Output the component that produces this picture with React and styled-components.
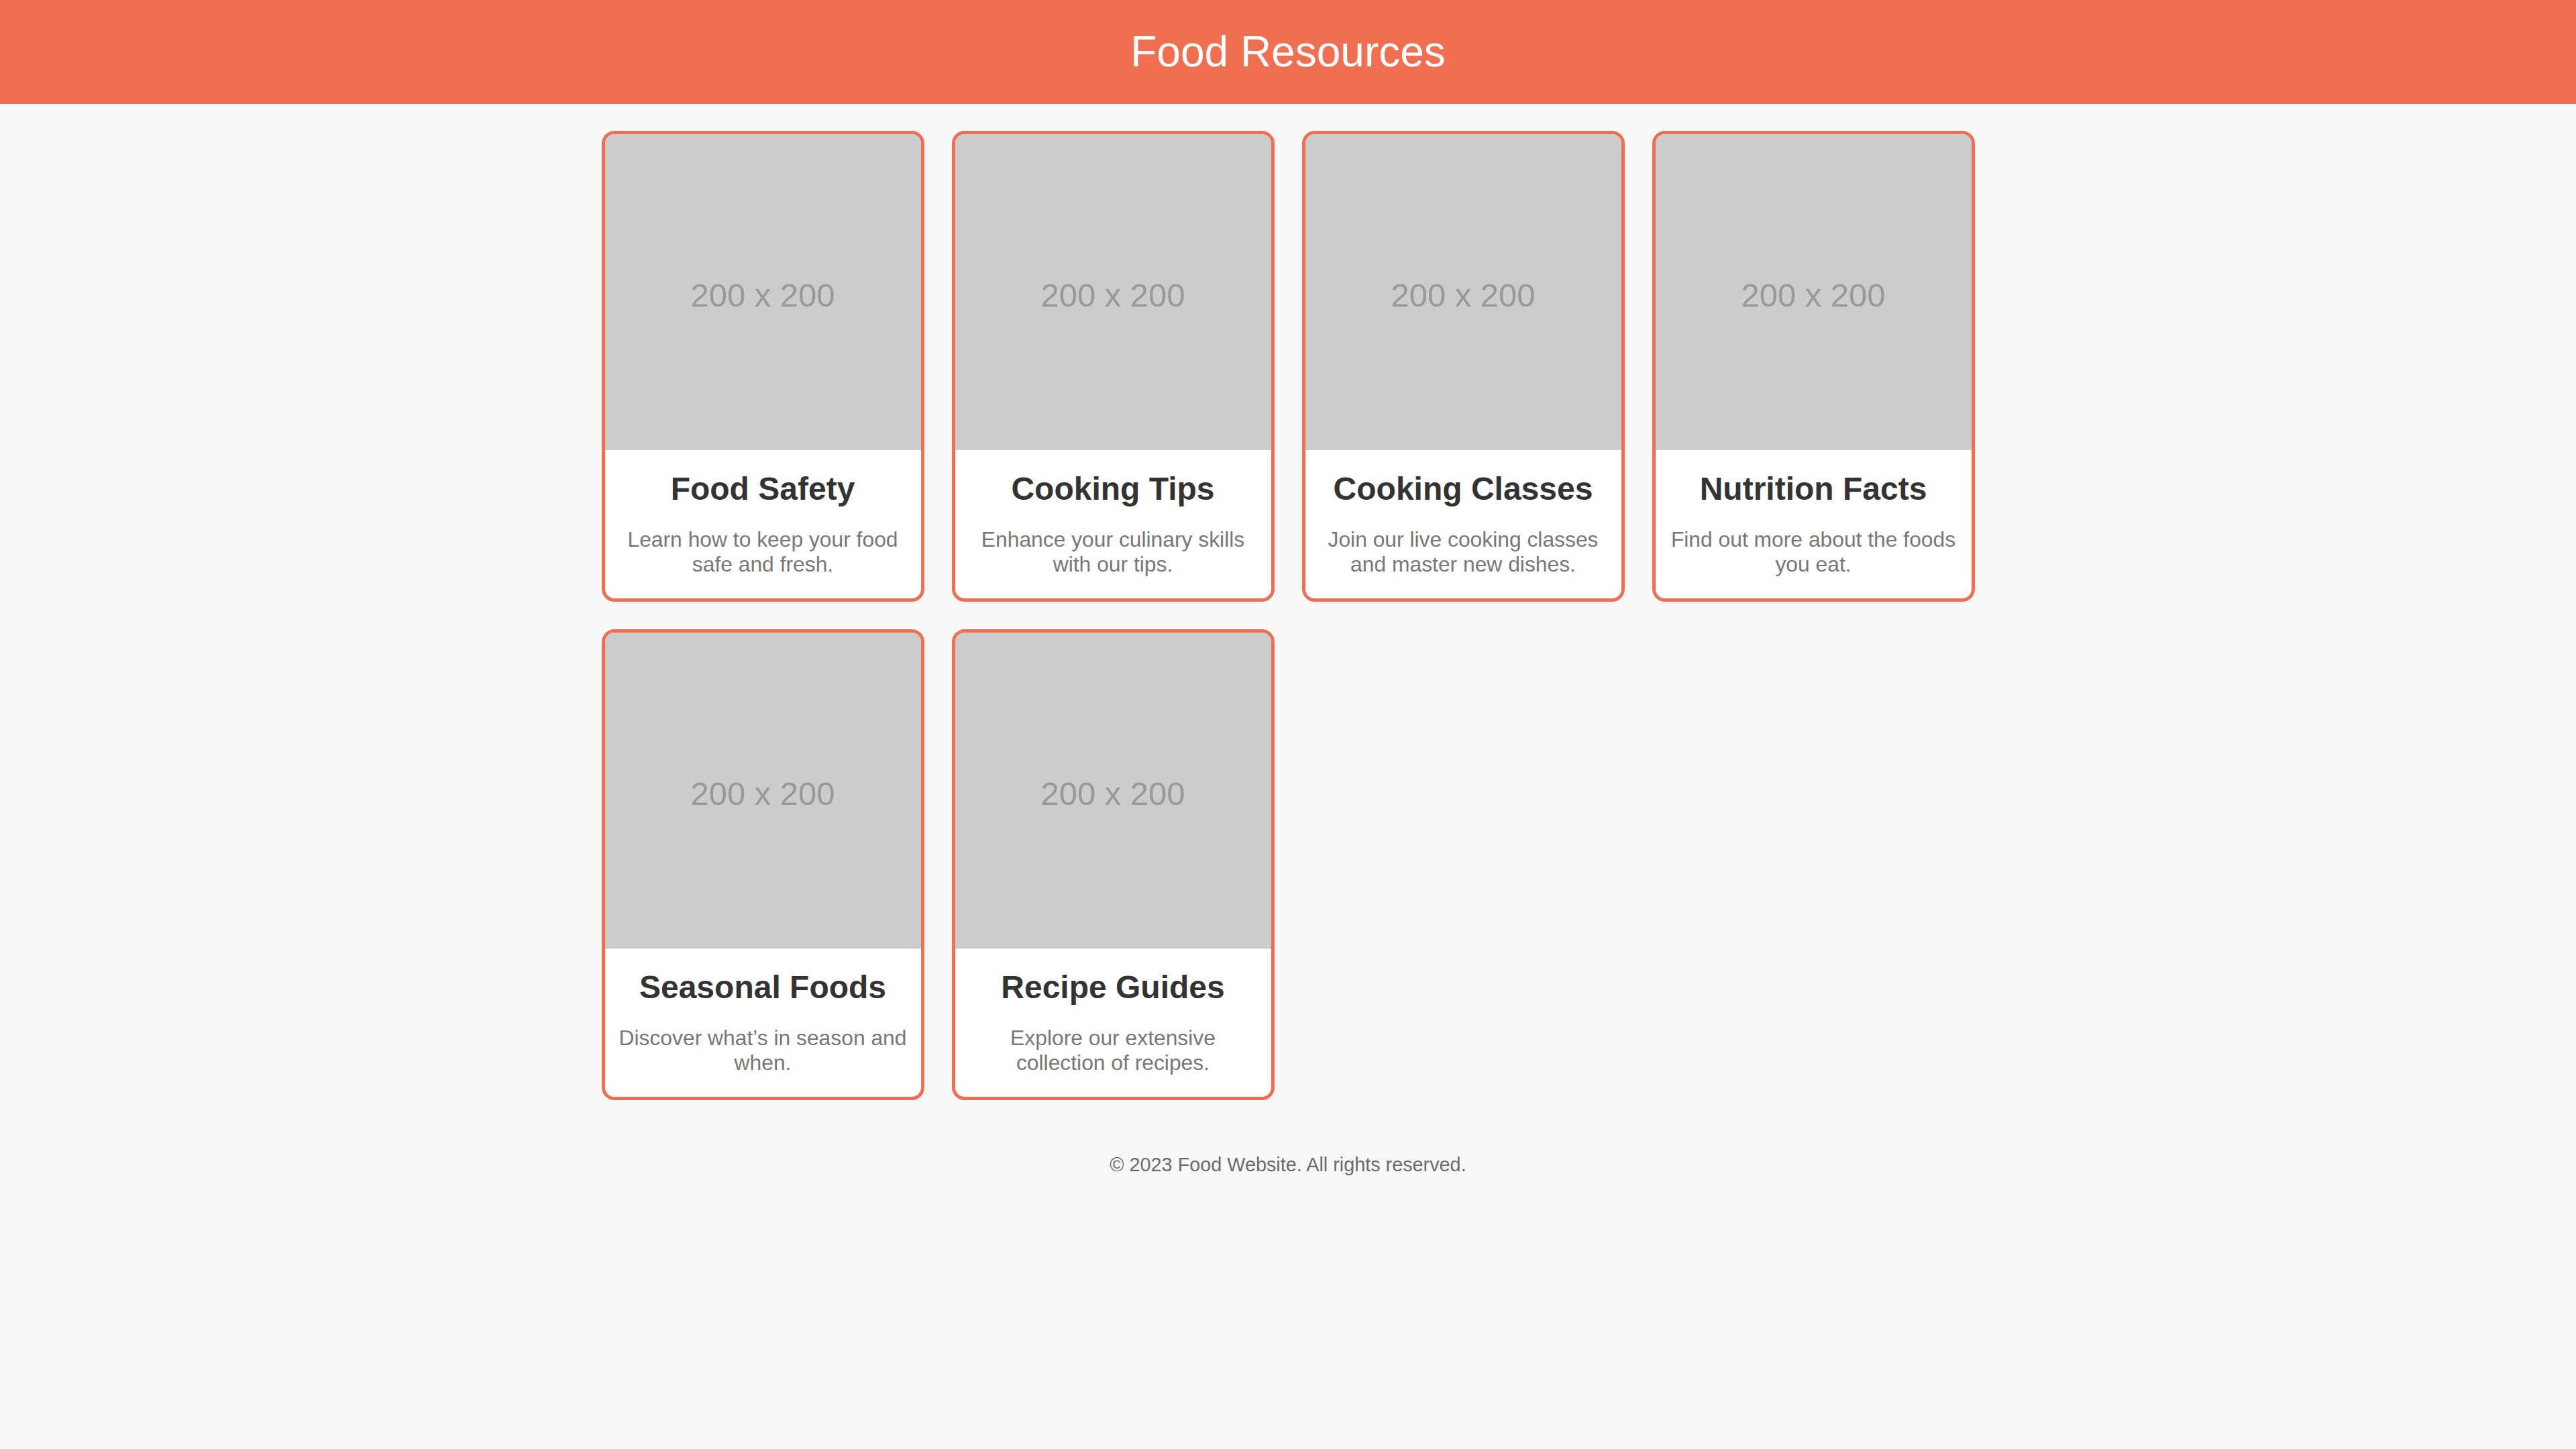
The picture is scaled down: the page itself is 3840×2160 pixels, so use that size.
import React from 'react'
import styled, { createGlobalStyle } from 'styled-components'

const resources = [
  { title: 'Food Safety', text: 'Learn how to keep your food safe and fresh.' },
  { title: 'Cooking Tips', text: 'Enhance your culinary skills with our tips.' },
  { title: 'Cooking Classes', text: 'Join our live cooking classes and master new dishes.' },
  { title: 'Nutrition Facts', text: 'Find out more about the foods you eat.' },
  { title: 'Seasonal Foods', text: 'Discover what\u2019s in season and when.' },
  { title: 'Recipe Guides', text: 'Explore our extensive collection of recipes.' },
]

function App() {
  return (
    <>
      <GlobalStyle />
      <Header>
        <Title>Food Resources</Title>
      </Header>
      <Main>
        <Grid>
          {resources.map(item => (
            <Card key={item.title}>
              <Placeholder>200 x 200</Placeholder>
              <CardBody>
                <CardTitle>{item.title}</CardTitle>
                <CardText>{item.text}</CardText>
              </CardBody>
            </Card>
          ))}
        </Grid>
      </Main>
      <Footer>&copy; 2023 Food Website. All rights reserved.</Footer>
    </>
  )
}

export default App

const GlobalStyle = createGlobalStyle`
  html, body {
    margin: 0;
    padding: 0;
    background: #f8f8f8;
    font-family: "Liberation Sans", Arial, sans-serif;
  }
`

const Header = styled.header`
  background: #ef6f53;
  padding: 40px 0 41px;
  text-align: center;
`

const Title = styled.h1`
  margin: 0;
  color: #fff;
  font-size: 64px;
  font-weight: 400;
  line-height: normal;
`

const Main = styled.main`
  padding: 40px 0 80px;
`

const Grid = styled.div`
  display: grid;
  grid-template-columns: repeat(4, 481px);
  justify-content: center;
  gap: 41px;
`

const Card = styled.div`
  background: #fff;
  border: 5px solid #ef6f53;
  border-radius: 19px;
  overflow: hidden;
  text-align: center;
`

const Placeholder = styled.div`
  height: 471px;
  box-sizing: border-box;
  padding-top: 9px;
  background: #cccccc;
  color: #999;
  font-size: 49px;
  display: flex;
  align-items: center;
  justify-content: center;
`

const CardBody = styled.div`
  padding: 30px 19px 32px;
`

const CardTitle = styled.h3`
  margin: 0 0 30px;
  font-size: 48px;
  font-weight: 700;
  color: #333;
  line-height: normal;
`

const CardText = styled.p`
  margin: 0;
  font-size: 31.8px;
  color: #777;
  line-height: 37px;
`

const Footer = styled.footer`
  text-align: center;
  font-size: 28.8px;
  color: #6b6b6b;
`
